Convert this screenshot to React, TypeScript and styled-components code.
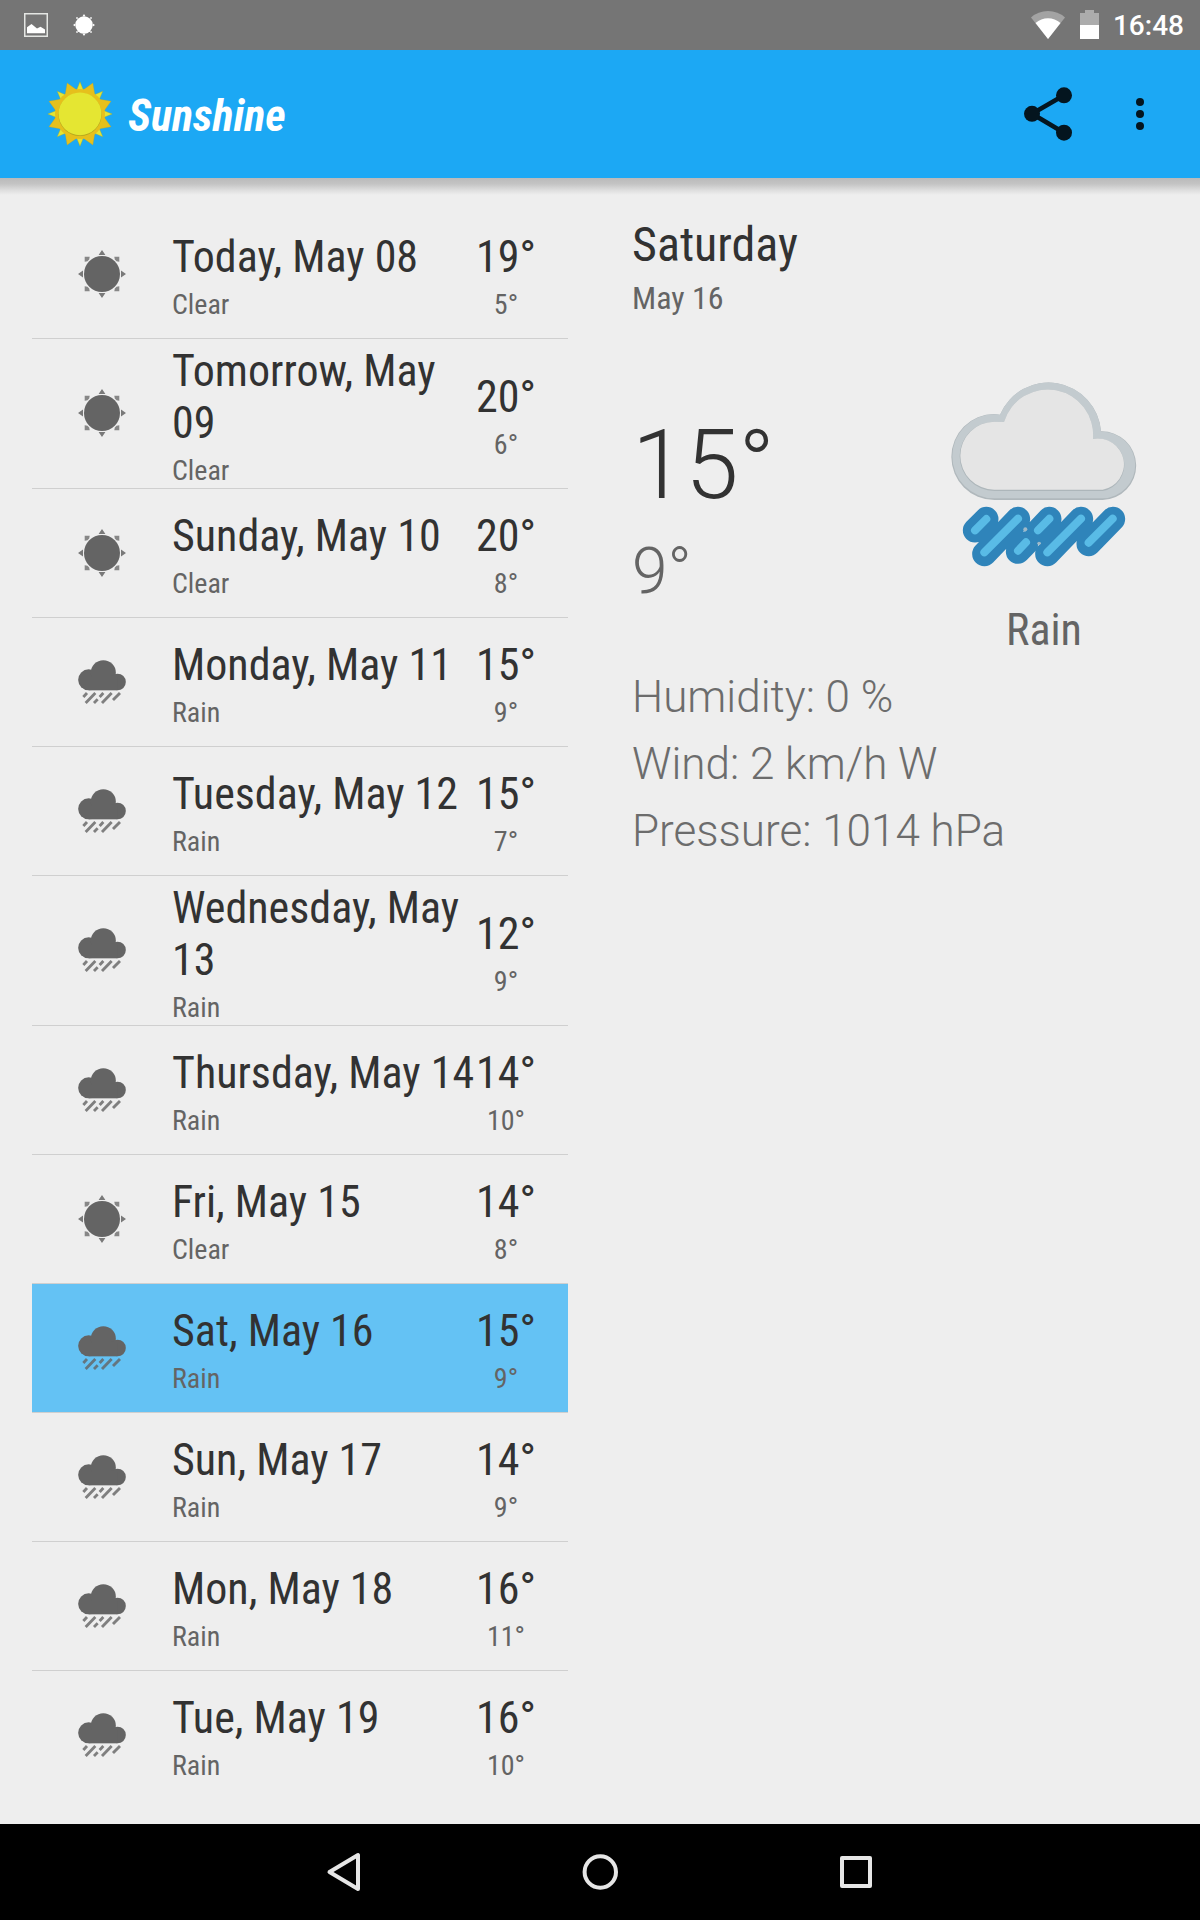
import React from "react";
import styled, { createGlobalStyle } from "styled-components";

const condensed = `"Roboto Condensed", Roboto, sans-serif`;

const GlobalStyle = createGlobalStyle`
  *, *::before, *::after { box-sizing: border-box; }
  body { margin: 0; background: #eeeeee; }
`;

const Screen = styled.div`
  width: 1200px;
  height: 1920px;
  display: flex;
  flex-direction: column;
  background: #eeeeee;
  color: #323232;
  font-family: Roboto, sans-serif;
  overflow: hidden;
`;

const StatusBar = styled.header`
  height: 50px;
  flex: none;
  display: flex;
  align-items: flex-start;
  justify-content: space-between;
  background: #757575;
  padding: 0 16px 0 24px;
  color: #fff;
`;

const StatusGroup = styled.div<{ $gap: number }>`
  display: flex;
  align-items: flex-start;
  gap: ${(p) => p.$gap}px;
`;

const StatusIcon = styled.svg<{ $top: number }>`
  display: block;
  margin-top: ${(p) => p.$top}px;
`;

const Clock = styled.time`
  font-size: 28px;
  line-height: 32px;
  font-weight: 500;
  margin: 10px 0 0 -1px;
`;

const AppBar = styled.div`
  height: 128px;
  flex: none;
  display: flex;
  align-items: center;
  background: #1ca8f4;
  padding: 0 54px 0 47px;
`;

const AppTitle = styled.h1`
  margin: 4px auto 0 15px;
  font-family: ${condensed};
  font-stretch: condensed;
  font-size: 44px;
  line-height: 52px;
  font-weight: 700;
  font-style: italic;
  color: #fff;
`;

const IconButton = styled.button`
  display: block;
  border: 0;
  padding: 0;
  background: none;
  margin-left: 62px;

  svg { display: block; }
`;

const Shadow = styled.div`
  height: 17px;
  flex: none;
  margin-bottom: -17px;
  background: linear-gradient(#bababa, #c4c4c4 35%, #dedede 72%, #eeeeee);
`;

const Content = styled.main`
  flex: 1;
  display: grid;
  grid-template-columns: 536px 1fr;
  column-gap: 64px;
  padding: 32px 31px 0 32px;
`;

const Forecast = styled.ul`
  list-style: none;
  margin: 0;
  padding: 0;
`;

const Day = styled.li<{ $selected?: boolean }>`
  display: grid;
  grid-template-columns: 140px 304px 60px;
  align-items: center;
  min-height: 129px;
  border-bottom: 1px solid #cfcfcf;
  background: ${(p) => (p.$selected ? "#64c2f4" : "transparent")};
  background-clip: padding-box;

  &:last-child { border-bottom-color: transparent; }
`;

const DayIcon = styled.svg`
  display: block;
  justify-self: center;
`;

const Lines = styled.div<{ $center?: boolean }>`
  text-align: ${(p) => (p.$center ? "center" : "left")};
  font-family: ${condensed};
  font-stretch: condensed;
  display: flex;
  flex-direction: column;
`;

const Primary = styled.span`
  font-size: 44px;
  line-height: 52px;
  padding: 5.6px 0 1px;
`;

const Secondary = styled.span`
  font-size: 28px;
  line-height: 33px;
  padding: 4px 0 1.4px;
  color: #646464;
`;

const Detail = styled.section`
  padding: 7px 0 0;
`;

const Weekday = styled.h2`
  margin: 0;
  font-family: ${condensed};
  font-stretch: condensed;
  font-weight: 400;
  font-size: 48px;
  line-height: 56px;
`;

const DateLine = styled.p`
  margin: 6px 0 0;
  font-family: ${condensed};
  font-stretch: condensed;
  font-size: 32px;
  line-height: 38px;
  color: #646464;
`;

const Today = styled.div`
  display: grid;
  grid-template-columns: 1fr 250px;
  margin-top: 65px;
  height: 289px;
`;

const High = styled.div`
  margin-top: 27px;
  font-weight: 300;
  font-size: 96px;
  line-height: 112px;
`;

const Low = styled.div`
  margin-top: 13px;
  font-weight: 300;
  font-size: 64px;
  line-height: 76px;
  color: #646464;
`;

const Condition = styled.figure`
  margin: 0;
  display: flex;
  flex-direction: column;
  align-items: center;

  svg { display: block; }
`;

const Caption = styled.figcaption`
  margin-top: 36px;
  font-family: ${condensed};
  font-stretch: condensed;
  font-size: 44px;
  line-height: 52px;
  color: #646464;
`;

const Measure = styled.p`
  margin: 0;
  height: 67px;
  font-weight: 300;
  font-size: 44px;
  line-height: 52px;
  color: #6c6c6c;
`;

const NavBar = styled.nav`
  height: 96px;
  flex: none;
  background: #000;
  display: flex;
  justify-content: center;
  align-items: center;
  gap: 208px;
`;

const NavIcon = styled.svg`
  display: block;
  width: 48px;
  height: 48px;
  fill: none;
  stroke: #e6e6e6;
  stroke-width: 4;
  stroke-linejoin: round;
`;

function spikes(cx: number, cy: number, tip: number, base: number, half: number, offset: number) {
  let d = "";
  for (let i = 0; i < 8; i++) {
    const a = ((offset + i * 45) * Math.PI) / 180;
    const at = (r: number, t: number) => `${(cx + r * Math.cos(t)).toFixed(2)} ${(cy + r * Math.sin(t)).toFixed(2)}`;
    d += `M${at(tip, a)}L${at(base, a + half)}L${at(base, a - half)}Z`;
  }
  return d;
}

const Logo = () => (
  <svg width="66" height="66" viewBox="0 0 66 66">
    <path d={spikes(33, 33, 32.2, 22, 0.2, 0)} fill="#e4e534" stroke="#a5a832" strokeWidth=".4" />
    <path d={spikes(33, 33, 33.6, 24, 0.28, 22.5)} fill="#e6c01c" stroke="#b2a02c" strokeWidth=".3" />
    <circle cx="33" cy="33" r="25" fill="#e6c01c" />
    <circle cx="33" cy="33.5" r="21.6" fill="#b6a81f" />
    <circle cx="33" cy="32.8" r="21.4" fill="#e5e632" />
  </svg>
);

const ClearIcon = () => (
  <DayIcon width="48" height="48" viewBox="0 0 48 48" fill="#646464">
    <circle cx="24" cy="24" r="18" />
    <path d="M24 0l3.400 5h-6.800zM24 48l3.400-5h-6.800zM0 24l5-3.400v6.800zM48 24l-5-3.400v6.800z" opacity=".85" />
    <path d="M6.700 6.700h5l-.5 2.800-1.700 1.700-2.800.5zM41.300 6.700h-5l.5 2.800 1.700 1.700 2.800.5zM6.700 41.300h5l-.5-2.800-1.700-1.700-2.800-.5zM41.300 41.300h-5l.5-2.800 1.700-1.700 2.800-.5z" opacity=".75" />
  </DayIcon>
);

const RainIcon = () => (
  <DayIcon width="48" height="44" viewBox="54 60 144 132" fill="#646464">
    <circle cx="86" cy="119.500" r="31.500" />
    <circle cx="130" cy="98" r="37.500" />
    <circle cx="172.500" cy="126" r="25" />
    <path d="M86 110H172V151H86Z" />
    <g stroke="#646464" strokeWidth="8.500" opacity=".8">
      <path d="M70 171L81 159M77 189L106 159M102 189L113 178M119 171L130 159M126 189L155 159M159 180L180 159" />
    </g>
  </DayIcon>
);

const RainArt = () => (
  <svg width="186" height="186" viewBox="65 66 558 558">
    <path d="M195 420A129 129 0 0 1 195 162L212 164A158 158 0 0 1 515 214A102 102 0 0 1 520 420Z" fill="#b0b8bc" />
    <path d="M195 415A126 126 0 0 1 195 163L212 164A158 158 0 0 1 515 215A100 100 0 0 1 520 415Z" fill="#c3cbcf" />
    <path d="M195 393A104 104 0 0 1 195 185L224 186A136.600 136.600 0 0 1 491 237A78 78 0 1 1 520 393Z" fill="#adb6ba" />
    <path d="M195 389A102 102 0 0 1 195 185L224 186A136.600 136.600 0 0 1 491 237A78 77 0 1 1 520 389Z" fill="#e5e5e5" />
    <g strokeLinecap="round" fill="none">
      <path
        d="M137 511L171 477M165 582L266 477M266 575L290 550M326 513L360 477M354 582L455 477M478 552L551 477"
        stroke="#2f84ba"
        strokeWidth="73"
      />
      <path
        d="M137 511L171 477M165 577L266 476M266 572L290 547M326 511L360 476M354 577L455 476M478 548L550 476"
        stroke="#59bbe6"
        strokeWidth="24"
      />
    </g>
    <circle cx="288" cy="508" r="6" fill="#9fb9c8" />
    <circle cx="329" cy="550" r="5" fill="#9fb9c8" />
  </svg>
);

type Weather = "Clear" | "Rain";

const days: { label: string; weather: Weather; high: number; low: number; selected?: boolean }[] = [
  { label: "Today, May 08", weather: "Clear", high: 19, low: 5 },
  { label: "Tomorrow, May 09", weather: "Clear", high: 20, low: 6 },
  { label: "Sunday, May 10", weather: "Clear", high: 20, low: 8 },
  { label: "Monday, May 11", weather: "Rain", high: 15, low: 9 },
  { label: "Tuesday, May 12", weather: "Rain", high: 15, low: 7 },
  { label: "Wednesday, May 13", weather: "Rain", high: 12, low: 9 },
  { label: "Thursday, May 14", weather: "Rain", high: 14, low: 10 },
  { label: "Fri, May 15", weather: "Clear", high: 14, low: 8 },
  { label: "Sat, May 16", weather: "Rain", high: 15, low: 9, selected: true },
  { label: "Sun, May 17", weather: "Rain", high: 14, low: 9 },
  { label: "Mon, May 18", weather: "Rain", high: 16, low: 11 },
  { label: "Tue, May 19", weather: "Rain", high: 16, low: 10 },
];

export default function App() {
  return (
    <Screen>
      <GlobalStyle />
      <StatusBar>
        <StatusGroup $gap={25}>
          <StatusIcon $top={13} width="24" height="24" viewBox="0 0 24 24">
            <rect x=".75" y=".75" width="22.500" height="22.500" fill="none" stroke="#e4e6e3" strokeWidth="1.500" />
            <path d="M3 20.300V14.300L7.500 11L13 15.500L16.500 13.700L21 16.500V20.300Z" fill="#fff" />
          </StatusIcon>
          <StatusIcon $top={14} width="22" height="22" viewBox="0 0 22 22" fill="#fff">
            <circle cx="11" cy="11" r="8.700" />
            <path d="M11 0l1.500 2.200h-3zM11 22l1.500-2.200h-3zM0 11l2.200-1.500v3zM22 11l-2.200-1.500v3z" />
            <path d="M3 3h2v2H3zM17 3h2v2h-2zM3 17h2v2H3zM17 17h2v2h-2z" opacity=".6" />
          </StatusIcon>
        </StatusGroup>
        <StatusGroup $gap={15}>
          <StatusIcon $top={11} width="34" height="28" viewBox="0 0 34 28">
            <path d="M17 28L0 6.500Q7 0 17 0T34 6.500Z" fill="#a3a3a3" />
            <path d="M17 28L4.500 12Q10 7.300 17 7.300T29.500 12Z" fill="#fff" />
          </StatusIcon>
          <StatusIcon $top={10} width="19" height="29" viewBox="0 0 19 29">
            <path d="M0 3H5V0H14V3H19V16H0Z" fill="#acacac" />
            <path d="M0 15H19V29H0Z" fill="#fff" />
          </StatusIcon>
          <Clock>16:48</Clock>
        </StatusGroup>
      </StatusBar>
      <AppBar>
        <Logo />
        <AppTitle>Sunshine</AppTitle>
        <IconButton aria-label="Share">
          <svg width="48" height="54" viewBox="0 0 48 54" fill="#04151f">
            <path d="M40 8.300L8 26.700L40 45.700" fill="none" stroke="#04151f" strokeWidth="4.600" />
            <circle cx="40" cy="8.300" r="8" />
            <circle cx="8" cy="26.800" r="8" />
            <circle cx="40" cy="45.700" r="8" />
          </svg>
        </IconButton>
        <IconButton aria-label="More options">
          <svg width="12" height="32" viewBox="0 0 12 32" fill="#04151f">
            <circle cx="6" cy="4" r="4" />
            <circle cx="6" cy="16" r="4" />
            <circle cx="6" cy="28" r="4" />
          </svg>
        </IconButton>
      </AppBar>
      <Shadow />
      <Content>
        <Forecast>
          {days.map((d) => (
            <Day key={d.label} $selected={d.selected}>
              {d.weather === "Clear" ? <ClearIcon /> : <RainIcon />}
              <Lines>
                <Primary>{d.label}</Primary>
                <Secondary>{d.weather}</Secondary>
              </Lines>
              <Lines $center>
                <Primary>{d.high}°</Primary>
                <Secondary>{d.low}°</Secondary>
              </Lines>
            </Day>
          ))}
        </Forecast>
        <Detail>
          <Weekday>Saturday</Weekday>
          <DateLine>May 16</DateLine>
          <Today>
            <div>
              <High>15°</High>
              <Low>9°</Low>
            </div>
            <Condition>
              <RainArt />
              <Caption>Rain</Caption>
            </Condition>
          </Today>
          <Measure>Humidity: 0 %</Measure>
          <Measure>Wind: 2 km/h W</Measure>
          <Measure>Pressure: 1014 hPa</Measure>
        </Detail>
      </Content>
      <NavBar>
        <NavIcon viewBox="0 0 48 48">
          <path d="M38 7V41L9.500 24Z" />
        </NavIcon>
        <NavIcon viewBox="0 0 48 48">
          <circle cx="24.300" cy="24" r="15.700" />
        </NavIcon>
        <NavIcon viewBox="0 0 48 48">
          <rect x="10" y="10" width="28" height="28" />
        </NavIcon>
      </NavBar>
    </Screen>
  );
}
